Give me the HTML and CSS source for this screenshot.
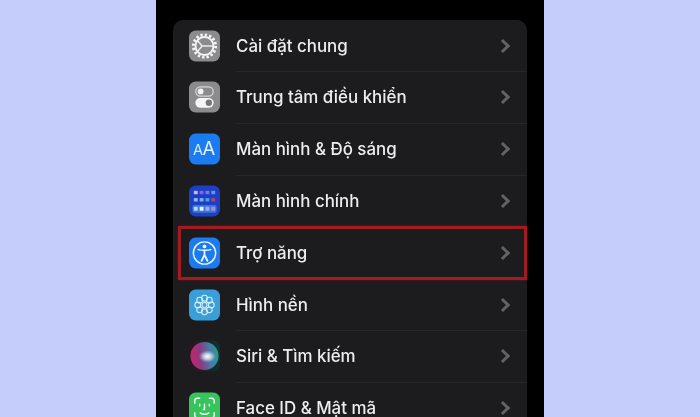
FILE: index.html
```html
<!DOCTYPE html>
<html lang="vi">
<head>
    <meta charset="UTF-8">
    <title>Cài đặt</title>
    <link rel="stylesheet" href="styles.css">
</head>
<body>
    <div class="phone">
        <div class="card">
            <div class="row">
                <svg class="icon" viewBox="0 0 32 32">
                    <rect width="32" height="32" rx="7" fill="#8b8b8d"/>
                    <circle cx="16" cy="16" r="11.500" fill="none" stroke="#f4f4f4" stroke-width="3" stroke-dasharray="2.400 2.110"/>
                    <circle cx="16" cy="16" r="9.300" fill="none" stroke="#f4f4f4" stroke-width="2"/>
                    <path d="M13.500 16L9 10.500M13.500 16H25M13.500 16L9 21.500" stroke="#ececec" stroke-width="1.500"/>
                </svg>
                <span class="label">Cài đặt chung</span>
                <span class="chev"></span>
            </div>
            <div class="row">
                <svg class="icon" viewBox="0 0 32 32">
                    <rect width="32" height="32" rx="7" fill="#8b8b8d"/>
                    <rect x="7" y="5.500" width="18" height="9.500" rx="4.750" fill="none" stroke="#d8d8d8" stroke-width="1.300"/>
                    <circle cx="12" cy="10.250" r="3" fill="#f4f4f4"/>
                    <rect x="6.500" y="17" width="19" height="10" rx="5" fill="#f6f6f6"/>
                    <circle cx="20.500" cy="22" r="3.300" fill="#77777a"/>
                </svg>
                <span class="label">Trung tâm điều khiển</span>
                <span class="chev"></span>
            </div>
            <div class="row">
                <svg class="icon" viewBox="0 0 32 32">
                    <rect width="32" height="32" rx="7" fill="#1a7cf0"/>
                    <text class="aa-small" x="4" y="22.500">A</text>
                    <text class="aa-big" x="14" y="22.500">A</text>
                </svg>
                <span class="label">Màn hình &amp; Độ sáng</span>
                <span class="chev"></span>
            </div>
            <div class="row">
                <svg class="icon" viewBox="0 0 32 32">
                    <rect width="32" height="32" rx="7" fill="#1c3fc4"/>
                    <rect x="5" y="5.500" width="4" height="3.500" fill="#c9b8f0"/>
                    <rect x="11" y="5.500" width="4" height="3.500" fill="#8e62d8"/>
                    <rect x="17" y="5.500" width="4" height="3.500" fill="#7a78e0"/>
                    <rect x="23" y="5.500" width="4" height="3.500" fill="#6f8ff0"/>
                    <rect x="5" y="13" width="4" height="3.500" fill="#8fb8f0"/>
                    <rect x="11" y="13" width="4" height="3.500" fill="#6fb6e8"/>
                    <rect x="17" y="13" width="4" height="3.500" fill="#4f9fe0"/>
                    <rect x="23" y="13" width="4" height="3.500" fill="#b0407f"/>
                    <rect x="3.500" y="20" width="25" height="8" rx="2" fill="#3f74dc"/>
                    <rect x="5" y="22" width="4" height="4" fill="#a8e0f0"/>
                    <rect x="11" y="22" width="4" height="4" fill="#e8f4fa"/>
                    <rect x="17" y="22" width="4" height="4" fill="#a8a8e8"/>
                    <rect x="23" y="22" width="4" height="4" fill="#a090d8"/>
                </svg>
                <span class="label">Màn hình chính</span>
                <span class="chev"></span>
            </div>
            <div class="row selected">
                <svg class="icon" viewBox="0 0 32 32">
                    <rect width="32" height="32" rx="7" fill="#1a7cf0"/>
                    <circle cx="16" cy="16" r="11.500" fill="none" stroke="#e8f2fc" stroke-width="1.500"/>
                    <circle cx="16" cy="9.200" r="1.900" fill="#f0f6fc"/>
                    <path d="M9.500 12.500C12 13.500 20 13.500 22.500 12.500" fill="none" stroke="#f0f6fc" stroke-width="1.600" stroke-linecap="round"/>
                    <path d="M16 13.500V18M16 18L13 24M16 18L19 24" fill="none" stroke="#f0f6fc" stroke-width="1.900" stroke-linecap="round"/>
                </svg>
                <span class="label">Trợ năng</span>
                <span class="chev"></span>
            </div>
            <div class="row">
                <svg class="icon" viewBox="0 0 32 32">
                    <rect width="32" height="32" rx="7" fill="#3a9fd8"/>
                    <g fill="none" stroke="#d8eef8" stroke-width="1.100">
                        <circle cx="16" cy="16" r="2.500"/>
                        <circle cx="16" cy="9" r="3"/>
                        <circle cx="16" cy="23" r="3"/>
                        <circle cx="11" cy="11" r="3"/>
                        <circle cx="21" cy="11" r="3"/>
                        <circle cx="11" cy="21" r="3"/>
                        <circle cx="21" cy="21" r="3"/>
                        <circle cx="9" cy="16" r="3"/>
                        <circle cx="23" cy="16" r="3"/>
                    </g>
                </svg>
                <span class="label">Hình nền</span>
                <span class="chev"></span>
            </div>
            <div class="row">
                <svg class="icon" viewBox="0 0 32 32">
                    <defs>
                        <linearGradient id="siriball" x1="0" y1="0.5" x2="1" y2="0.4">
                            <stop offset="0" stop-color="#c8246a"/>
                            <stop offset="0.35" stop-color="#8a3a80"/>
                            <stop offset="0.7" stop-color="#4a7aa8"/>
                            <stop offset="1" stop-color="#2a9a90"/>
                        </linearGradient>
                        <radialGradient id="sirilight" cx="0.5" cy="0.5" r="0.5">
                            <stop offset="0" stop-color="#ffffff"/>
                            <stop offset="0.45" stop-color="#cfe4f4" stop-opacity="0.8"/>
                            <stop offset="1" stop-color="#9fc4e4" stop-opacity="0"/>
                        </radialGradient>
                        <linearGradient id="siribg" x1="0" y1="0" x2="1" y2="0">
                            <stop offset="0" stop-color="#2a1420"/>
                            <stop offset="1" stop-color="#0c3230"/>
                        </linearGradient>
                    </defs>
                    <rect width="32" height="32" rx="7" fill="url(#siribg)"/>
                    <circle cx="16" cy="16" r="14.500" fill="url(#siriball)"/>
                    <ellipse cx="19" cy="16.500" rx="9" ry="6.500" fill="url(#sirilight)"/>
                </svg>
                <span class="label">Siri &amp; Tìm kiếm</span>
                <span class="chev"></span>
            </div>
            <div class="row">
                <svg class="icon" viewBox="0 0 32 32">
                    <rect width="32" height="32" rx="7" fill="#37c45c"/>
                    <g fill="none" stroke="#f0faf2" stroke-width="1.500" stroke-linecap="round">
                        <path d="M6 11V8.500A2.500 2.500 0 0 1 8.500 6H11M21 6H23.500A2.500 2.500 0 0 1 26 8.500V11M6 21V23.500A2.500 2.500 0 0 0 8.500 26H11M21 26H23.500A2.500 2.500 0 0 0 26 23.500V21"/>
                        <path d="M11 12V14M21 12V14M16 12V17.500H14.800M11.500 21C14 23 18 23 20.500 21"/>
                    </g>
                </svg>
                <span class="label">Face ID &amp; Mật mã</span>
                <span class="chev"></span>
            </div>
        </div>
    </div>
</body>
</html>
```

FILE: styles.css
```css
html, body { margin: 0; height: 417px; overflow: hidden; }
body { background: #c5cdfb; font-family: "Inter", "Liberation Sans", sans-serif; }

.phone { width: 388px; height: 417px; margin: 0 auto; padding: 19.7px 17px 0; box-sizing: border-box; background: #000; overflow: hidden; filter: blur(0.4px); }
.card { background: #1c1c1e; border-radius: 10px 10px 0 0; }

.row { position: relative; display: flex; align-items: center; height: 51.8px; box-sizing: border-box; padding-left: 16px; }
.row + .row::before { content: ""; position: absolute; left: 63px; right: 0; top: 0; height: 1px; background: #272729; }
.selected::after { content: ""; position: absolute; left: 5px; right: 0; top: -1px; bottom: -1px; border: 3px solid #a01c22; box-shadow: 0 0 2px #7a1218; z-index: 1; }

.icon { width: 31px; height: 32px; flex: none; }
.label { margin-left: 16px; flex: 1; color: #ededed; font-size: 16.9px; font-weight: 500; white-space: nowrap; }
.chev { width: 7px; height: 7px; margin-right: 19px; border-top: 3px solid #636365; border-right: 3px solid #636365; transform: rotate(45deg); }

.aa-small { font-size: 15px; fill: #dbeafc; }
.aa-big { font-size: 19px; fill: #e8f2fc; }
```
